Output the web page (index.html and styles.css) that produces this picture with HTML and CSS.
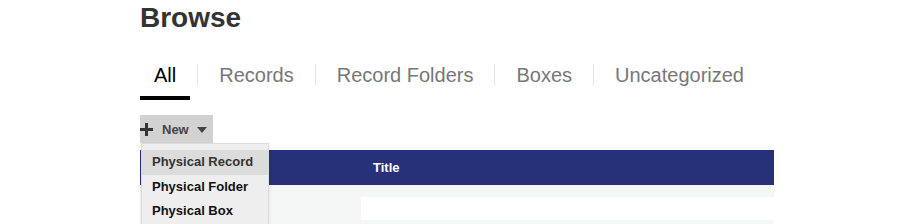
FILE: index.html
```html
<!DOCTYPE html>
<html>
<head>
<meta charset="utf-8">
<link rel="stylesheet" href="styles.css">
</head>
<body>
<div class="page">
  <h1 class="title">Browse</h1>
  <ul class="tabs">
    <li class="tab active">All</li>
    <li class="sep"></li>
    <li class="tab">Records</li>
    <li class="sep"></li>
    <li class="tab">Record Folders</li>
    <li class="sep"></li>
    <li class="tab">Boxes</li>
    <li class="sep"></li>
    <li class="tab">Uncategorized</li>
  </ul>
  <div class="toolbar">
    <div class="new-wrap">
      <button class="new-btn">
        <svg class="plus" width="13" height="13" viewBox="0 0 13 13"><path d="M5 0h3v5h5v3H8v5H5V8H0V5h5z" fill="#333"/></svg>
        <span class="new-label">New</span>
        <svg class="caret" width="10" height="6" viewBox="0 0 10 6"><path d="M0 0h10L5 6z" fill="#444"/></svg>
      </button>
      <ul class="menu">
        <li class="menu-item hover">Physical Record</li>
        <li class="menu-item">Physical Folder</li>
        <li class="menu-item">Physical Box</li>
      </ul>
    </div>
  </div>
  <div class="table">
    <div class="thead">
      <div class="th"></div>
      <div class="th">Title</div>
    </div>
    <div class="filter-row">
      <div class="fcell"></div>
      <div class="fcell input"></div>
    </div>
  </div>
</div>
</body>
</html>
```
FILE: styles.css
```css
* { box-sizing: border-box; }
body {
  margin: 0;
  background: #fff;
  font-family: "Liberation Sans", Arial, sans-serif;
}
.page {
  width: 634px;
  margin-left: 140px;
}
.title {
  margin: 2px 0 0;
  font-size: 28px;
  line-height: 32px;
  font-weight: bold;
  color: #333;
}
.tabs {
  list-style: none;
  margin: 30px 0 0 0;
  padding: 0;
  display: flex;
  align-items: flex-start;
}
.tab {
  font-size: 20px;
  line-height: 22px;
  color: #777;
  padding: 0 14px 10px;
  border-bottom: 4px solid transparent;
}
.tab.active {
  color: #000;
  border-bottom-color: #000;
}
.sep {
  width: 1px;
  height: 22px;
  background: #e6e6e6;
  margin: 0 7px;
}
.toolbar {
  margin-top: 15px;
  display: flex;
}
.new-wrap {
  position: relative;
}
.new-btn {
  display: flex;
  align-items: center;
  height: 28px;
  padding: 0 6px 0 0;
  border: 0;
  background: #d2d2d2;
  font-family: inherit;
  font-size: 13px;
  font-weight: bold;
  color: #444;
}
.plus { margin-right: 9px; }
.new-label { margin-right: 8px; }
.caret { margin-top: 1px; }
.menu {
  position: absolute;
  left: 1px;
  top: 28px;
  width: 128px;
  margin: 0;
  padding: 6px 0 0;
  list-style: none;
  background: #eeeeee;
  border: 1px solid #dcdcdc;
  border-bottom: 0;
  z-index: 2;
  box-shadow: 0 2px 4px rgba(0,0,0,0.08);
}
.menu-item {
  height: 24.5px;
  line-height: 24px;
  padding-left: 10px;
  font-size: 13px;
  font-weight: bold;
  color: #111;
}
.menu-item.hover {
  background: #dcdcdc;
  color: #333;
}
.table {
  margin-top: 7px;
}
.thead {
  display: grid;
  grid-template-columns: 221px 1fr;
  height: 35px;
  background: #26317a;
}
.th {
  padding-left: 12px;
  line-height: 35px;
  font-size: 13px;
  font-weight: bold;
  color: #fff;
}
.filter-row {
  display: grid;
  grid-template-columns: 221px 1fr;
  background: #f5f7f7;
  padding: 12px 0 4px;
}
.fcell { height: 23px; }
.fcell.input { background: #fff; }
```
